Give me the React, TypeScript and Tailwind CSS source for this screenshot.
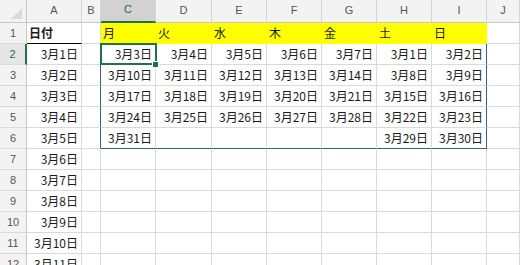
const rowsA = ['3月1日', '3月2日', '3月3日', '3月4日', '3月5日', '3月6日', '3月7日', '3月8日', '3月9日', '3月10日', '3月11日']

// カレンダー部分 (C..I, 行2..6)
const cal: string[][] = [
  ['3月3日', '3月4日', '3月5日', '3月6日', '3月7日', '3月1日', '3月2日'],
  ['3月10日', '3月11日', '3月12日', '3月13日', '3月14日', '3月8日', '3月9日'],
  ['3月17日', '3月18日', '3月19日', '3月20日', '3月21日', '3月15日', '3月16日'],
  ['3月24日', '3月25日', '3月26日', '3月27日', '3月28日', '3月22日', '3月23日'],
  ['3月31日', '', '', '', '', '3月29日', '3月30日'],
]
const week = ['月', '火', '水', '木', '金', '土', '日']
const letters = ['A', 'B', 'C', 'D', 'E', 'F', 'G', 'H', 'I', 'J']

function cellClass(r: number, c: number) {
  // r: 1-based row, c: 0 = A ... 9 = J
  const inCal = c >= 2 && c <= 8
  let cls = 'h-[21px] border-r border-b border-[#dadada] flex items-center overflow-hidden whitespace-nowrap'
  if (r === 1 && inCal) cls += ' bg-[#ffff00] border-r-[#ffff00] border-b-[#ffff00] justify-start pl-[2px]'
  else if (r === 1 && c === 0) cls += ' border-b-black justify-start pl-[2px] font-bold'
  else cls += ' justify-end pr-[3px]'
  if (r >= 2 && r <= 6 && (c === 1 || c === 8)) cls += ' border-r-[#3a5d9c]'
  if (r === 6 && inCal) cls += ' border-b-[#3a5d9c]'
  return cls
}

function cellText(r: number, c: number) {
  if (c === 0) return r === 1 ? '日付' : rowsA[r - 2] ?? ''
  if (c >= 2 && c <= 8) {
    if (r === 1) return week[c - 2]
    if (r <= 6) return cal[r - 2][c - 2]
  }
  return ''
}

export default function App() {
  const rows = Array.from({ length: 12 }, (_, i) => i + 1)
  return (
    <div className="relative w-[520px] h-[265px] overflow-hidden bg-white font-['Noto_Sans_CJK_JP',sans-serif] text-[12px] text-[#1a1a1a]">
      <div className="grid grid-cols-[27px_55px_19px_55px_56px_55px_55px_55px_55px_55px_1fr]">
        {/* 列見出し */}
        <div className="h-[23px] border-r border-b border-[#c8c8c8] bg-[#f3f3f3] relative">
          <svg className="absolute left-0 top-0" width="26" height="22" viewBox="0 0 26 22">
            <polygon points="11,19 22,19 22,8" fill="#dadada" />
          </svg>
        </div>
        {letters.map((l) =>
          l === 'C' ? (
            <div key={l} className="h-[23px] border-r border-r-[#d4d4d4] border-b-2 border-b-[#217346] bg-[#d2d2d2] flex items-center justify-center pb-[2px] text-[11px] text-[#1f6b3f] font-['Liberation_Sans',sans-serif]">
              {l}
            </div>
          ) : (
            <div key={l} className="h-[23px] border-r border-r-[#d4d4d4] border-b border-b-[#c8c8c8] bg-[#f3f3f3] flex items-center justify-center pb-[2px] text-[11px] text-[#555] font-['Liberation_Sans',sans-serif]">
              {l}
            </div>
          )
        )}

        {rows.map((r) => (
          <div key={r} className="contents">
            {r === 2 ? (
              <div className="h-[21px] border-r-2 border-r-[#217346] border-b border-b-[#dadada] bg-[#e6e6e6] flex items-center justify-center text-[11px] text-[#1f6b3f] font-['Liberation_Sans',sans-serif]">
                {r}
              </div>
            ) : (
              <div className="h-[21px] border-r border-r-[#c8c8c8] border-b border-b-[#dadada] bg-[#f3f3f3] flex items-center justify-center text-[11px] text-[#555] font-['Liberation_Sans',sans-serif]">
                {r}
              </div>
            )}
            {letters.map((_, c) => (
              <div key={c} className={cellClass(r, c)}>
                {cellText(r, c)}
              </div>
            ))}
          </div>
        ))}
      </div>

      {/* 選択セル C2 */}
      <div className="absolute left-[100px] top-[43px] w-[57px] h-[22px] border-2 border-[#217346] pointer-events-none" />
      <div className="absolute left-[152px] top-[61px] w-[7px] h-[7px] bg-[#217346] border border-white" />
    </div>
  )
}
